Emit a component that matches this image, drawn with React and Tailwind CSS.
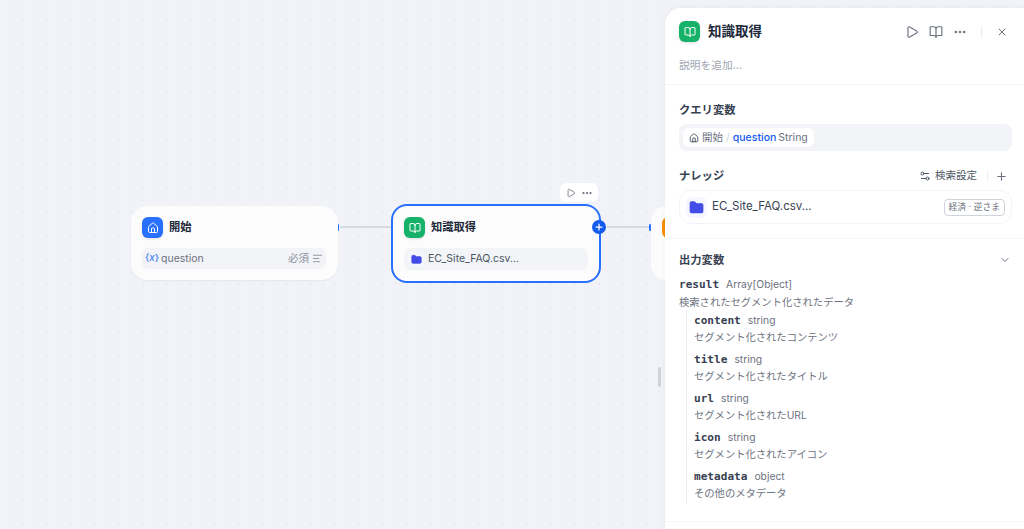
import { House, BookOpen, Play, Ellipsis, X, Plus, ChevronDown, Settings2, Folder, AlignLeft } from "lucide-react";

const sans = "font-['Inter','Noto_Sans_CJK_JP',sans-serif]";
const mono = "font-['DejaVu_Sans_Mono','Noto_Sans_CJK_JP',monospace]";

const fields = [
  { name: "content", type: "string", desc: "セグメント化されたコンテンツ" },
  { name: "title", type: "string", desc: "セグメント化されたタイトル" },
  { name: "url", type: "string", desc: "セグメント化されたURL" },
  { name: "icon", type: "string", desc: "セグメント化されたアイコン" },
  { name: "metadata", type: "object", desc: "その他のメタデータ" },
];

function FolderChip({ size, box }) {
  return (
    <span className={`flex items-center justify-center rounded-md bg-[#f5f7ff] ${box}`}>
      <Folder size={size} className="fill-[#444ce7] text-[#444ce7]" />
    </span>
  );
}

function Handle({ className }) {
  return <span className={`absolute h-[7px] w-[2px] rounded-[1px] bg-[#2970ff] ${className}`} />;
}

function StartNode() {
  return (
    <div className="absolute left-[131px] top-[206px] h-[74px] w-[207px] rounded-2xl bg-[#fcfcfd] pl-[11px] pr-[12px] pt-[11px] shadow-[0_1px_2px_rgba(16,24,40,0.05)]">
      <div className="flex h-[21px] items-center gap-[6px]">
        <span className="flex h-[21px] w-[21px] items-center justify-center rounded-md bg-[#2970ff] shadow-sm">
          <House size={12} strokeWidth={2} className="text-white" />
        </span>
        <span className="text-[11.25px] font-semibold text-[#1d2939]">開始</span>
      </div>
      <div className="mt-[10px] flex h-[21px] items-center rounded-md bg-[#f2f4f7] pl-[3px] pr-[3px] text-[10.5px] text-[#6c7280]">
        <span className="w-[12px] whitespace-nowrap text-center text-[9.5px] font-semibold text-[#5a8ff5]">{"{"}<i>x</i>{"}"}</span>
        <span className="ml-[4px]">question</span>
        <span className="ml-auto text-[#8a909c]">必須</span>
        <AlignLeft size={11} className="ml-[3px] text-[#8a909c]" />
      </div>
    </div>
  );
}

function KnowledgeNode() {
  return (
    <div className="absolute left-[391px] top-[204px] h-[79px] w-[210px] rounded-2xl border-2 border-[#2970ff] bg-[#fcfcfd] px-[11px] pt-[11px]">
      <div className="flex h-[21px] items-center gap-[6px]">
        <span className="flex h-[21px] w-[21px] items-center justify-center rounded-md bg-[#17b26a] shadow-sm">
          <BookOpen size={12} strokeWidth={2} className="text-white" />
        </span>
        <span className="text-[11.25px] font-semibold text-[#1d2939]">知識取得</span>
      </div>
      <div className="mt-[10px] flex h-[22px] items-center rounded-md bg-[#f2f4f7] pl-[4px] text-[10.5px] text-[#4b5563]">
        <FolderChip size={11} box="h-[16px] w-[16px]" />
        <span className="ml-[4px]">EC_Site_FAQ.csv...</span>
      </div>
      <span className="absolute right-[-7px] top-[14px] flex h-[14px] w-[14px] items-center justify-center rounded-full bg-[#155aef]">
        <Plus size={10} strokeWidth={3} className="text-white" />
      </span>
    </div>
  );
}

function Panel() {
  return (
    <aside className="relative ml-auto mt-[8px] flex h-[521px] w-[359px] flex-col rounded-tl-2xl bg-white shadow-[0_0_6px_rgba(16,24,40,0.05)]">
      <header className="h-[77px] border-b border-[#f5f6f8] px-[14px] pt-[13px]">
        <div className="flex h-[21px] items-center">
          <span className="flex h-[21px] w-[21px] items-center justify-center rounded-md bg-[#17b26a] shadow-sm">
            <BookOpen size={12} strokeWidth={2} className="text-white" />
          </span>
          <span className="ml-[8px] text-[13.5px] font-semibold text-[#1d2939]">知識取得</span>
          <div className="ml-auto flex items-center text-[#6c7280]">
            <Play size={14} />
            <BookOpen size={14} className="ml-[10px]" />
            <Ellipsis size={14} strokeWidth={2.5} className="ml-[10px]" />
            <span className="ml-[14px] h-[12px] w-px bg-[#eaecf0]" />
            <X size={12} className="ml-[14px] mr-[2px]" />
          </div>
        </div>
        <p className="mt-[16px] text-[10.75px] text-[#a0a6b1]">説明を追加...</p>
      </header>

      <section className="px-[14px] pt-[16px]">
        <h3 className="text-[11.3px] leading-[18px] font-semibold text-[#374151]">クエリ変数</h3>
        <div className="mt-[5px] flex h-[27px] w-[333px] items-center rounded-lg bg-[#f2f4f7] pl-[4px]">
          <div className="flex h-[19px] items-center rounded-md bg-white pl-[6px] pr-[6px] text-[10.5px] text-[#6c7280]">
            <House size={10} className="text-[#374151]" />
            <span className="ml-[3px]">開始</span>
            <span className="mx-[3px] text-[#d0d5dc]">/</span>
            <span className="font-medium text-[#155aef]">question</span>
            <span className="ml-[2px]">String</span>
          </div>
        </div>
      </section>

      <section className="border-b border-[#f5f6f8] px-[14px] pb-[14px] pt-[16px]">
        <div className="flex h-[18px] items-center">
          <h3 className="text-[11.3px] font-semibold text-[#374151]">ナレッジ</h3>
          <div className="ml-auto flex items-center text-[#4b5563]">
            <Settings2 size={12} />
            <span className="ml-[4px] text-[10.5px]">検索設定</span>
            <span className="ml-[10px] h-[10px] w-px bg-[#eaecf0]" />
            <Plus size={13} className="ml-[7px] mr-[2px] text-[#6c7280]" />
          </div>
        </div>
        <div className="mt-[5px] flex h-[34px] w-[333px] items-center rounded-xl border border-[#f2f4f7] bg-white pl-[6px] pr-[6px] text-[11.5px] text-[#374151]">
          <FolderChip size={15} box="h-[21px] w-[21px]" />
          <span className="ml-[5px]">EC_Site_FAQ.csv...</span>
          <span className="ml-auto flex h-[17px] items-center rounded-[4px] border border-[#d0d5dc] px-[4px] text-[8.8px] text-[#6c7280]">経済 · 逆さま</span>
        </div>
      </section>

      <section className="px-[14px] pt-[12px]">
        <div className="flex h-[18px] items-center">
          <h3 className="text-[11.3px] font-semibold text-[#374151]">出力変数</h3>
          <ChevronDown size={12} className="ml-auto mr-[-1px] text-[#6c7280]" />
        </div>
        <div className="mt-[8px] flex h-[16px] items-center">
          <span className={`${mono} text-[11.1px] font-bold text-[#374151]`}>result</span>
          <span className="ml-[7px] text-[10.3px] text-[#6c7280]">Array[Object]</span>
        </div>
        <p className="mt-[1px] text-[10.3px] leading-[16px] text-[#6c7280]">検索されたセグメント化されたデータ</p>
        <div className="ml-[7px] h-[193px] border-l border-[#e9ebf0] pl-[7px]">
          {fields.map(f => (
            <div key={f.name} className="h-[39px] pt-[3px]">
              <div className="flex h-[16px] items-center">
                <span className={`${mono} text-[11.1px] font-bold text-[#374151]`}>{f.name}</span>
                <span className="ml-[7px] text-[10.3px] text-[#6c7280]">{f.type}</span>
              </div>
              <p className="text-[10.3px] leading-[16px] text-[#6c7280]">{f.desc}</p>
            </div>
          ))}
        </div>
      </section>

      <div className="absolute bottom-[7px] left-0 w-full border-t border-[#f5f6f8]" />
    </aside>
  );
}

export default function App() {
  return (
    <div className={`${sans} relative h-[529px] w-[1024px] overflow-hidden bg-[#f2f3f8] bg-[radial-gradient(#ebecf1_1px,transparent_1px)] bg-[size:12px_12px] bg-[position:5px_2px]`}>
      <span className="absolute left-[340px] top-[226px] h-[2px] w-[51px] bg-[#d5dae3]" />
      <span className="absolute left-[607px] top-[226px] h-[2px] w-[44px] bg-[#d5dae3]" />
      <Handle className="left-[337px] top-[224px]" />
      <Handle className="left-[649px] top-[224px]" />

      <StartNode />

      <div className="absolute left-[560px] top-[183px] flex h-[19px] w-[38px] items-center justify-center gap-[5px] rounded-md bg-white text-[#6c7280]">
        <Play size={10} />
        <Ellipsis size={12} strokeWidth={2.5} />
      </div>
      <KnowledgeNode />

      <div className="absolute left-[651px] top-[206px] h-[74px] w-[30px] rounded-2xl bg-[#fcfcfd] pl-[11px] pt-[11px]">
        <span className="block h-[21px] w-[21px] rounded-md bg-[#f79009]" />
      </div>

      <span className="absolute left-[658px] top-[367px] h-[20px] w-[3px] rounded-sm bg-[#d0d5dc]" />

      <div className="absolute inset-0 flex">
        <Panel />
      </div>
    </div>
  );
}
